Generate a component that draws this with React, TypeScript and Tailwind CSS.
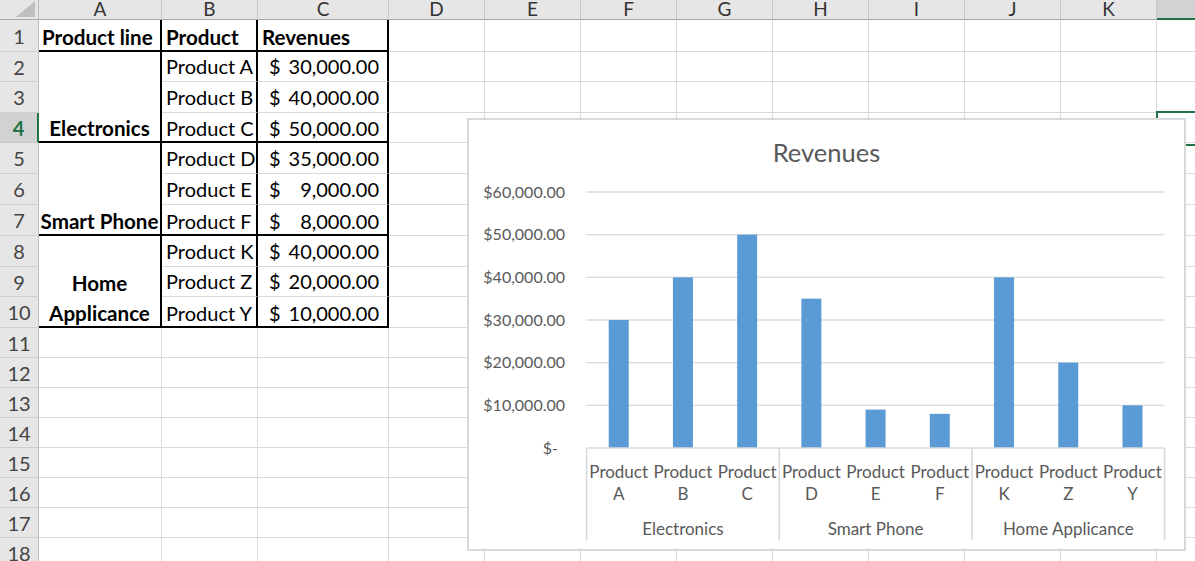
import React from 'react';

type Item = { name: string; value: string; amount: number };
type Group = { line: string[]; items: Item[] };

const groups: Group[] = [
  {
    line: ['Electronics'],
    items: [
      { name: 'Product A', value: '30,000.00', amount: 30000 },
      { name: 'Product B', value: '40,000.00', amount: 40000 },
      { name: 'Product C', value: '50,000.00', amount: 50000 },
    ],
  },
  {
    line: ['Smart Phone'],
    items: [
      { name: 'Product D', value: '35,000.00', amount: 35000 },
      { name: 'Product E', value: '9,000.00', amount: 9000 },
      { name: 'Product F', value: '8,000.00', amount: 8000 },
    ],
  },
  {
    line: ['Home', 'Applicance'],
    items: [
      { name: 'Product K', value: '40,000.00', amount: 40000 },
      { name: 'Product Z', value: '20,000.00', amount: 20000 },
      { name: 'Product Y', value: '10,000.00', amount: 10000 },
    ],
  },
];

const letters = ['A', 'B', 'C', 'D', 'E', 'F', 'G', 'H', 'I', 'J', 'K', 'L'];
const selectedRow = 4;

function Empty() {
  return <div className="border-r border-b border-[#dadada]" />;
}

function Blanks({ n }: { n: number }) {
  return (
    <>
      {Array.from({ length: n }).map((_, i) => (
        <Empty key={i} />
      ))}
    </>
  );
}

function RowHead({ n }: { n: number }) {
  const sel = n === selectedRow;
  return (
    <div
      className={
        sel
          ? 'flex items-center justify-center border-b border-b-[#c6c6c6] border-r-2 border-r-[#217346] bg-[#d2d2d2] text-[20px] font-bold text-[#217346]'
          : 'flex items-center justify-center border-b border-r border-b-[#cfcfcf] border-r-[#bdbdbd] bg-[#e6e6e6] text-[20px] text-[#444]'
      }
    >
      {n}
    </div>
  );
}

function ColHead({ l }: { l: string }) {
  const sel = l === 'L';
  return (
    <div
      className={
        sel
          ? 'flex items-end justify-center border-b-2 border-[#217346] bg-[#d2d2d2] text-[19px] leading-none text-[#333]'
          : 'flex items-end justify-center border-r border-b border-r-[#c8c8c8] border-b-[#a6a6a6] bg-[#e6e6e6] pb-[1px] text-[19px] leading-none text-[#333]'
      }
    >
      {l}
    </div>
  );
}

function Chart() {
  const plotL = 117.6;
  const catW = 64.22;
  const base = 328;
  const unit = 42.667;
  const all = groups.flatMap((g) => g.items);
  const ticks = ['$10,000.00', '$20,000.00', '$30,000.00', '$40,000.00', '$50,000.00', '$60,000.00'];

  return (
    <div className="absolute left-[467px] top-[118px] h-[433px] w-[719px] border-2 border-[#d9d9d9] bg-white">
      <svg width="715" height="429" viewBox="0 0 715 429" className="block">
        <text x="357.5" y="41.7" textAnchor="middle" fontSize="25.5" fill="#595959">
          Revenues
        </text>

        {ticks.map((t, i) => {
          const y = base - (i + 1) * unit;
          return (
            <g key={t}>
              <line x1={plotL} x2={plotL + catW * 9} y1={y} y2={y} stroke="#d9d9d9" strokeWidth="1.4" />
              <text x="96" y={y + 5.8} textAnchor="end" fontSize="16" fill="#595959">
                {t}
              </text>
            </g>
          );
        })}
        <text x="89" y={base + 5.8} textAnchor="end" fontSize="16" fill="#595959">
          $-
        </text>

        {all.map((it, i) => {
          const cx = plotL + catW * (i + 0.5);
          const h = (it.amount / 10000) * unit;
          return (
            <g key={it.name}>
              <rect x={cx - 10} y={base - h} width="20" height={h} fill="#5b9bd5" />
              <text x={cx} y="358.3" textAnchor="middle" fontSize="17" fill="#595959">
                Product
              </text>
              <text x={cx} y="380" textAnchor="middle" fontSize="17" fill="#595959">
                {it.name.slice(-1)}
              </text>
            </g>
          );
        })}

        <line x1={plotL} x2={plotL + catW * 9} y1={base} y2={base} stroke="#d9d9d9" strokeWidth="1.6" />
        {[0, 1, 2, 3].map((g) => {
          const x = plotL + g * catW * 3;
          return <line key={g} x1={x} x2={x} y1={base} y2="420" stroke="#d9d9d9" strokeWidth="1.6" />;
        })}
        {groups.map((g, i) => (
          <text
            key={g.line.join(' ')}
            x={plotL + catW * 3 * (i + 0.5)}
            y="415"
            textAnchor="middle"
            fontSize="17"
            fill="#595959"
          >
            {g.line.join(' ')}
          </text>
        ))}
      </svg>
    </div>
  );
}

export default function App() {
  let row = 1;

  return (
    <div className="relative h-[561px] w-[1195px] overflow-hidden bg-white font-['Lato','Liberation_Sans',sans-serif] text-black">
      <div className="grid w-[1253px] grid-cols-[39px_123px_96px_131px_repeat(9,96px)] grid-rows-[20px_32px_30px_31px_30px_31px_31px_31px_31px_30px_31px_repeat(8,30px)]">
        {/* header row */}
        <div className="relative border-r border-b border-r-[#bdbdbd] border-b-[#a6a6a6] bg-[#e6e6e6]">
          <svg width="39" height="20" className="absolute inset-0">
            <polygon points="35,1 35,17 16,17" fill="#bfbfbf" />
          </svg>
        </div>
        {letters.map((l) => (
          <ColHead key={l} l={l} />
        ))}

        {/* row 1 */}
        <RowHead n={row++} />
        <div className="flex items-end border-r-2 border-b-2 border-black pl-[3px] text-[20.6px] leading-[26px] font-bold whitespace-nowrap">
          Product line
        </div>
        <div className="flex items-end border-r-2 border-b-2 border-black pl-[4px] text-[20.6px] leading-[26px] font-bold">
          Product
        </div>
        <div className="flex items-end border-r-2 border-b-2 border-black pl-[4px] text-[20.6px] leading-[26px] font-bold">
          Revenues
        </div>
        <Blanks n={9} />

        {/* grouped data */}
        {groups.map((g) =>
          g.items.map((it, k) => {
            const n = row++;
            const last = k === g.items.length - 1;
            return (
              <React.Fragment key={it.name}>
                <RowHead n={n} />
                {k === 0 && (
                  <div className="row-span-3 flex flex-col items-center justify-end border-r-2 border-b-2 border-black text-[20.6px] leading-[30px] font-bold whitespace-nowrap">
                    {g.line.map((t) => (
                      <span key={t} className="translate-y-[2px]">
                        {t}
                      </span>
                    ))}
                  </div>
                )}
                <div
                  className={
                    last
                      ? 'flex items-end border-r-2 border-b-2 border-black pl-[4px] text-[20px] leading-[26px] whitespace-nowrap'
                      : 'flex items-end border-r-2 border-b border-r-black border-b-[#dadada] pl-[4px] text-[20px] leading-[30px] whitespace-nowrap'
                  }
                >
                  {it.name}
                </div>
                <div
                  className={
                    last
                      ? 'flex items-end justify-between border-r-2 border-b-2 border-black pr-[8px] pl-[11px] text-[20px] leading-[26px]'
                      : 'flex items-end justify-between border-r-2 border-b border-r-black border-b-[#dadada] pr-[8px] pl-[11px] text-[20px] leading-[30px]'
                  }
                >
                  <span>$</span>
                  <span>{it.value}</span>
                </div>
                <Blanks n={9} />
              </React.Fragment>
            );
          })
        )}

        {/* empty rows */}
        {Array.from({ length: 8 }).map((_, i) => {
          const n = row++;
          return (
            <React.Fragment key={n}>
              <RowHead n={n} />
              <Blanks n={12} />
            </React.Fragment>
          );
        })}
      </div>

      {/* active cell L4 */}
      <div className="absolute left-[1156px] top-[111px] h-[35px] w-[98px] border-2 border-[#217346]" />

      <Chart />
    </div>
  );
}
